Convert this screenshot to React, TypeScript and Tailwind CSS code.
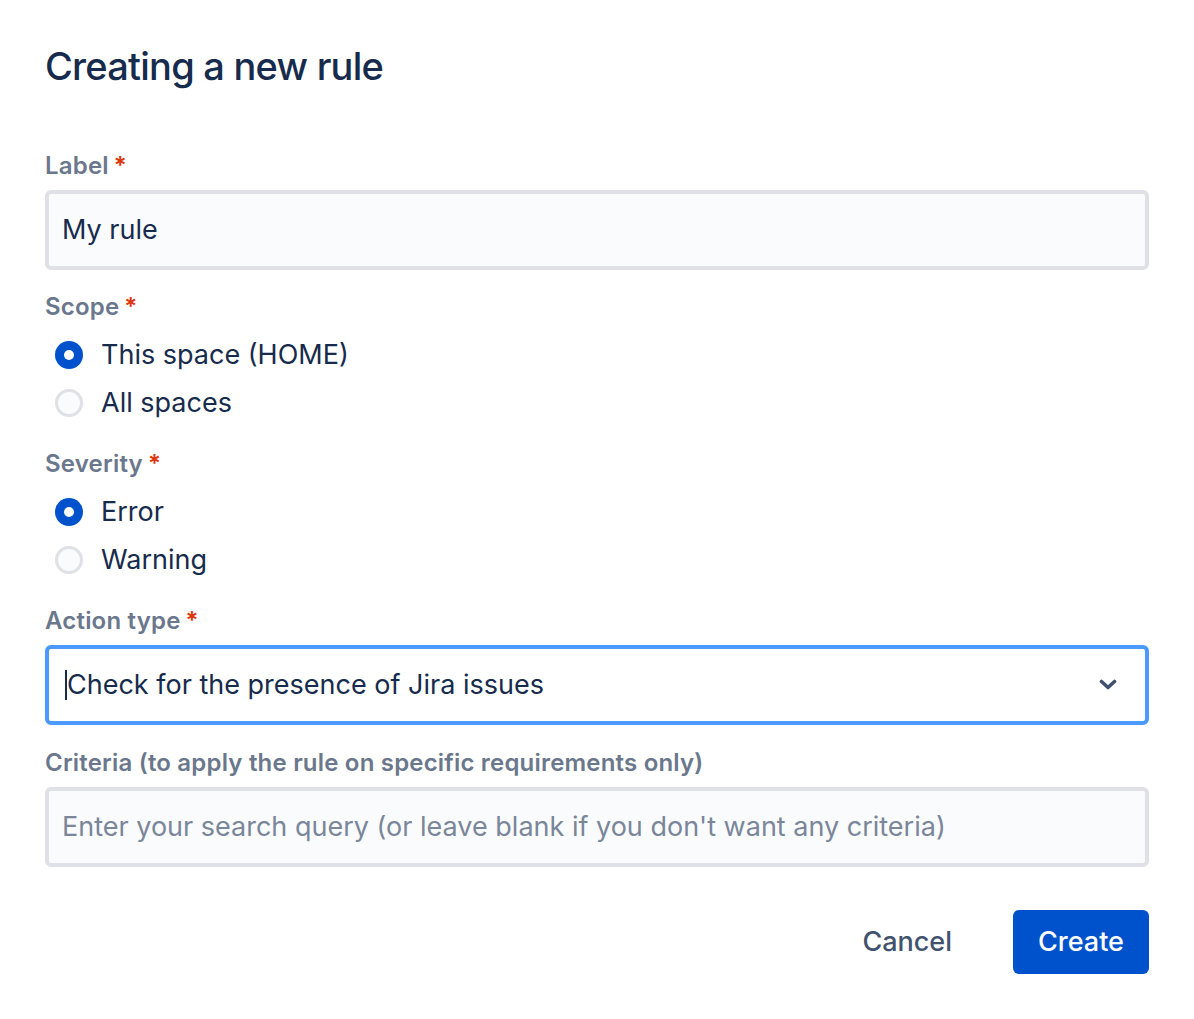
import { useState } from "react";

type Option = { id: string; label: string };

function FieldLabel({ text, required = true }: { text: string; required?: boolean }) {
  return (
    <div className="flex h-8 items-center text-[24px] font-semibold tracking-[0.008em] text-[#6B778C]">
      <span>{text}</span>
      {required && <span className="ml-[5px] text-[#DE350B]">*</span>}
    </div>
  );
}

function RadioGroup({
  options,
  value,
  onChange,
}: {
  options: Option[];
  value: string;
  onChange: (id: string) => void;
}) {
  return (
    <div className="mt-2 flex flex-col">
      {options.map((o) => {
        const checked = o.id === value;
        return (
          <label
            key={o.id}
            className="flex h-12 cursor-pointer items-center text-[27px] text-[#172B4D]"
            onClick={() => onChange(o.id)}
          >
            <span className="flex w-[56px] items-center pl-[10px]">
              {checked ? (
                <span className="flex h-[28px] w-[28px] items-center justify-center rounded-full bg-[#0052CC]">
                  <span className="h-[10px] w-[10px] rounded-full bg-white" />
                </span>
              ) : (
                <span className="h-[28px] w-[28px] rounded-full border-[3px] border-[#DFE1E6] bg-[#FAFBFC]" />
              )}
            </span>
            <span>{o.label}</span>
          </label>
        );
      })}
    </div>
  );
}

export default function App() {
  const [scope, setScope] = useState("space");
  const [severity, setSeverity] = useState("error");

  return (
    <div
      className="min-h-[1019px] bg-white px-[45px] pt-[42px]"
      style={{ fontFamily: "Inter, 'Noto Sans', sans-serif" }}
    >
      <h1 className="h-12 text-[38px] font-medium leading-[48px] tracking-[-0.02em] text-[#172B4D]">
        Creating a new rule
      </h1>

      <div className="mt-[60px]">
        <FieldLabel text="Label" />
        <div className="mt-2 flex h-[80px] items-center rounded-[6px] border-4 border-[#DFE1E6] bg-[#FAFBFC] px-[13px] text-[27px] text-[#172B4D]">
          My rule
        </div>
      </div>

      <div className="mt-[21px]">
        <FieldLabel text="Scope" />
        <RadioGroup
          value={scope}
          onChange={setScope}
          options={[
            { id: "space", label: "This space (HOME)" },
            { id: "all", label: "All spaces" },
          ]}
        />
      </div>

      <div className="mt-[21px]">
        <FieldLabel text="Severity" />
        <RadioGroup
          value={severity}
          onChange={setSeverity}
          options={[
            { id: "error", label: "Error" },
            { id: "warning", label: "Warning" },
          ]}
        />
      </div>

      <div className="mt-[21px]">
        <FieldLabel text="Action type" />
        <div className="mt-2 flex h-[80px] items-center justify-between rounded-[6px] border-4 border-[#4C9AFF] bg-white pl-[16px] pr-[28px] text-[27px] text-[#172B4D]">
          <span className="flex items-center">
            <span className="h-[30px] w-[2px] bg-[#172B4D]" />
            <span>Check for the presence of Jira issues</span>
          </span>
          <svg width="18" height="12" viewBox="0 0 18 12" className="text-[#42526E]">
            <path
              d="M2.5 2.5 L9 8.5 L15.5 2.5"
              fill="none"
              stroke="currentColor"
              strokeWidth="3.6"
              strokeLinecap="round"
              strokeLinejoin="round"
            />
          </svg>
        </div>
      </div>

      <div className="mt-[22px]">
        <FieldLabel text="Criteria (to apply the rule on specific requirements only)" required={false} />
        <div className="mt-2 flex h-[80px] items-center rounded-[6px] border-4 border-[#DFE1E6] bg-[#FAFBFC] px-[13px] text-[27px] text-[#7A869A]">
          Enter your search query (or leave blank if you don't want any criteria)
        </div>
      </div>

      <div className="mt-[43px] flex items-center justify-end gap-2">
        <button className="h-[64px] rounded-[6px] px-[24px] text-[27px] font-medium text-[#42526E]">
          Cancel
        </button>
        <button className="ml-[29px] h-[64px] w-[136px] rounded-[6px] bg-[#0052CC] text-[27px] font-medium text-white">
          Create
        </button>
      </div>
    </div>
  );
}
